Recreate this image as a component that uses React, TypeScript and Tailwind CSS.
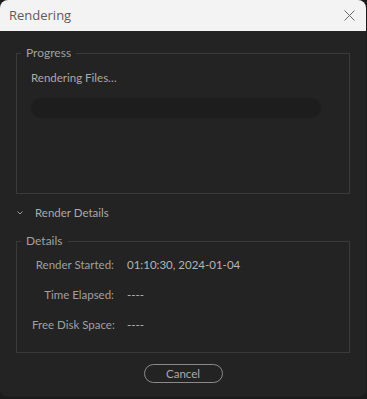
import React from "react";

const rows = [
  { label: "Render Started:", value: "01:10:30, 2024-01-04" },
  { label: "Time Elapsed:", value: "----" },
  { label: "Free Disk Space:", value: "----" },
];

const App = () => {
  return (
    <div className="w-[367px] h-[399px] bg-[#1b1b1b] font-['Lato','Liberation_Sans',sans-serif]">
      <div className="w-[366px] h-[397px] rounded-lg overflow-hidden bg-[#232323] flex flex-col">
        {/* title bar */}
        <div className="h-[31px] bg-[#f3f3f3] flex items-center justify-between pl-[9px] pr-[11px]">
          <span className="text-[13px] text-[#5c5c5c] font-['Open_Sans',sans-serif]">Rendering</span>
          <svg width="11" height="11" viewBox="0 0 11 11" className="text-[#6a6a6a]">
            <path d="M0.5 0.5 L10.5 10.5 M10.5 0.5 L0.5 10.5" stroke="currentColor" strokeWidth="1" fill="none" />
          </svg>
        </div>

        <div className="flex-1 px-4 pt-[15px] flex flex-col">
          {/* progress group */}
          <fieldset className="border border-[#3a3a3a] h-[148px]">
            <legend className="ml-[4px] px-[5px] text-[12px] text-[#a0a0a0] leading-[14px]">Progress</legend>
            <div className="px-[14px]">
              <div className="text-[11.5px] text-[#aaaaaa] mt-[10px] leading-[16px]">Rendering Files…</div>
              <div className="mt-[12px] h-5 w-[290px] rounded-full bg-[#1d1d1d]" />
            </div>
          </fieldset>

          {/* collapsible header */}
          <div className="flex items-center mt-[11px] h-[16px]">
            <svg width="6" height="4" viewBox="0 0 6 4" className="ml-[1px] mr-[12px] text-[#9a9a9a]">
              <path d="M0.5 0.5 L3 3 L5.5 0.5" stroke="currentColor" strokeWidth="1" fill="none" />
            </svg>
            <span className="text-[11.5px] text-[#aaaaaa]">Render Details</span>
          </div>

          {/* details group */}
          <fieldset className="border border-[#3a3a3a] mt-[13px] h-[119px]">
            <legend className="ml-[4px] px-[5px] text-[12px] text-[#a0a0a0] leading-[14px]">Details</legend>
            <div className="flex flex-col gap-[14px] mt-[9px] pl-[15px]">
              {rows.map((r) => (
                <div key={r.label} className="flex items-center h-4 text-[11.5px] whitespace-nowrap">
                  <span className="w-[82px] shrink-0 text-right text-[#a0a0a0]">{r.label}</span>
                  <span className="ml-[13px] text-[#b4b4b4]">{r.value}</span>
                </div>
              ))}
            </div>
          </fieldset>

          {/* footer */}
          <div className="flex justify-center mt-[11px]">
            <button className="w-[79px] h-[19px] rounded-full border border-[#8a8a8a] text-[11.5px] text-[#aaaaaa] leading-none">
              Cancel
            </button>
          </div>
        </div>
      </div>
    </div>
  );
};

export default App;
